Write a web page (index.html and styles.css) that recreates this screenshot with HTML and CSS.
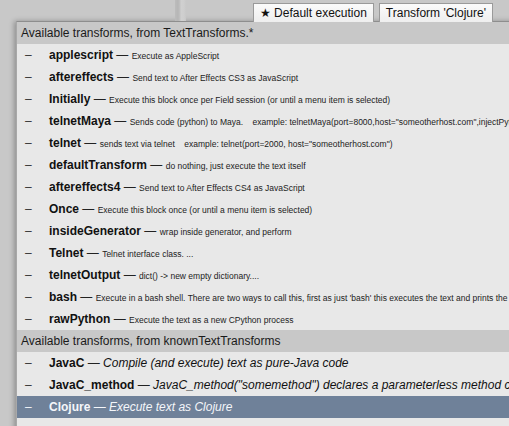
FILE: index.html
```html
<!DOCTYPE html>
<html>
<head>
<meta charset="utf-8">
<link rel="stylesheet" href="styles.css">
</head>
<body>
<div class="window">
  <div class="toolbar">
    <div class="divider"></div>
    <div class="buttons">
      <span class="btn">★ Default execution</span>
      <span class="btn">Transform 'Clojure'</span>
    </div>
  </div>
  <div class="menu">
    <div class="section">Available transforms, from TextTransforms.*</div>
    <div class="row"><span class="dash">–</span><span class="name">applescript</span><span class="sep"> — </span><span class="desc">Execute as AppleScript</span></div>
    <div class="row"><span class="dash">–</span><span class="name">aftereffects</span><span class="sep"> — </span><span class="desc">Send text to After Effects CS3 as JavaScript</span></div>
    <div class="row"><span class="dash">–</span><span class="name">Initially</span><span class="sep"> — </span><span class="desc">Execute this block once per Field session (or until a menu item is selected)</span></div>
    <div class="row"><span class="dash">–</span><span class="name">telnetMaya</span><span class="sep"> — </span><span class="desc">Sends code (python) to Maya.    example: telnetMaya(port=8000,host="someotherhost.com",injectPython=True)</span></div>
    <div class="row"><span class="dash">–</span><span class="name">telnet</span><span class="sep"> — </span><span class="desc">sends text via telnet    example: telnet(port=2000, host="someotherhost.com")</span></div>
    <div class="row"><span class="dash">–</span><span class="name">defaultTransform</span><span class="sep"> — </span><span class="desc">do nothing, just execute the text itself</span></div>
    <div class="row"><span class="dash">–</span><span class="name">aftereffects4</span><span class="sep"> — </span><span class="desc">Send text to After Effects CS4 as JavaScript</span></div>
    <div class="row"><span class="dash">–</span><span class="name">Once</span><span class="sep"> — </span><span class="desc">Execute this block once (or until a menu item is selected)</span></div>
    <div class="row"><span class="dash">–</span><span class="name">insideGenerator</span><span class="sep"> — </span><span class="desc">wrap inside generator, and perform</span></div>
    <div class="row"><span class="dash">–</span><span class="name">Telnet</span><span class="sep"> — </span><span class="desc">Telnet interface class. ...</span></div>
    <div class="row"><span class="dash">–</span><span class="name">telnetOutput</span><span class="sep"> — </span><span class="desc">dict() -&gt; new empty dictionary....</span></div>
    <div class="row"><span class="dash">–</span><span class="name">bash</span><span class="sep"> — </span><span class="desc">Execute in a bash shell. There are two ways to call this, first as just 'bash' this executes the text and prints the output</span></div>
    <div class="row"><span class="dash">–</span><span class="name">rawPython</span><span class="sep"> — </span><span class="desc">Execute the text as a new CPython process</span></div>
    <div class="section">Available transforms, from knownTextTransforms</div>
    <div class="row"><span class="dash">–</span><span class="name">JavaC</span><span class="sep"> — </span><span class="idesc">Compile (and execute) text as pure-Java code</span></div>
    <div class="row"><span class="dash">–</span><span class="name">JavaC_method</span><span class="sep"> — </span><span class="idesc">JavaC_method("somemethod") declares a parameterless method called somemethod</span></div>
    <div class="row selected"><span class="dash">–</span><span class="name">Clojure</span><span class="sep"> — </span><span class="idesc">Execute text as Clojure</span></div>
    <div class="row"></div>
  </div>
</div>
</body>
</html>
```

FILE: styles.css
```css
html, body {
  margin: 0;
  padding: 0;
  width: 509px;
  height: 426px;
  overflow: hidden;
  background: #c8c8c8;
  font-family: "Liberation Sans", Arial, sans-serif;
  color: #111;
}

.window {
  width: 509px;
  height: 426px;
  overflow: hidden;
}

.toolbar {
  height: 21px;
  display: flex;
  position: relative;
}

.divider {
  position: absolute;
  left: 175px;
  top: 0;
  width: 11px;
  height: 21px;
  background: linear-gradient(to right, #bcbcbc 0, #b6b6b6 3px, #c2c2c2 5px, #d0d0d0 6px, #cecece 9px, #c8c8c8 11px);
}

.buttons {
  margin-left: auto;
  margin-right: 16px;
  margin-top: 3px;
  display: flex;
  gap: 5px;
  height: 18px;
}

.btn {
  display: block;
  height: 18px;
  line-height: 18px;
  padding: 0 6px;
  font-size: 12px;
  color: #111;
  background: linear-gradient(#fbfbfb, #eeeeee);
  border: 1px solid #9a9a9a;
  border-bottom: none;
}

.menu {
  margin-left: 16px;
  width: 560px;
  border-top: 1px solid #8e8e8e;
  border-left: 1px solid #a8a8a8;
  background: #e8e8e8;
  box-shadow: -2px 0 5px rgba(0, 0, 0, 0.28);
  white-space: nowrap;
}

.section {
  height: 22px;
  line-height: 22px;
  background: #c8c8c8;
  font-size: 12px;
  padding-left: 4px;
  color: #1a1a1a;
}

.row {
  height: 22px;
  line-height: 22px;
  display: flex;
  align-items: baseline;
  white-space: pre;
}

.row > span {
  flex-shrink: 0;
}

.dash {
  width: 32px;
  padding-left: 8px;
  box-sizing: border-box;
  font-size: 12px;
  color: #333;
}

.name {
  font-weight: bold;
  font-size: 12px;
  color: #111;
}

.sep {
  font-size: 12px;
  color: #222;
}

.desc {
  font-size: 8.5px;
  color: #222;
}

.idesc {
  font-size: 12px;
  font-style: italic;
  color: #111;
}

.selected {
  background: #6f8199;
}

.selected .dash,
.selected .name,
.selected .sep,
.selected .idesc {
  color: #f4f6fa;
}
```
